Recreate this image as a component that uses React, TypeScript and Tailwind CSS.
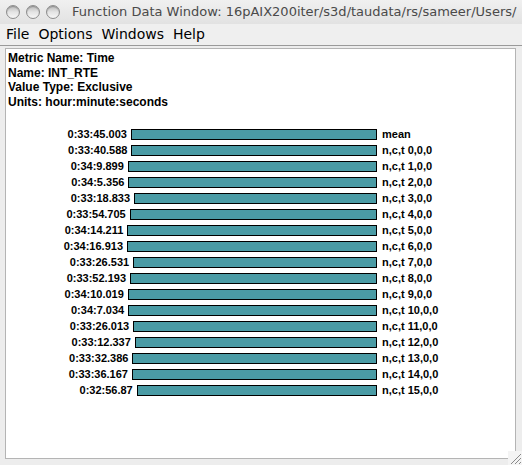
import React from "react";

// rows of the function data window: label, value string
const rows = [
  { name: "mean", value: "0:33:45.003" },
  { name: "n,c,t 0,0,0", value: "0:33:40.588" },
  { name: "n,c,t 1,0,0", value: "0:34:9.899" },
  { name: "n,c,t 2,0,0", value: "0:34:5.356" },
  { name: "n,c,t 3,0,0", value: "0:33:18.833" },
  { name: "n,c,t 4,0,0", value: "0:33:54.705" },
  { name: "n,c,t 5,0,0", value: "0:34:14.211" },
  { name: "n,c,t 6,0,0", value: "0:34:16.913" },
  { name: "n,c,t 7,0,0", value: "0:33:26.531" },
  { name: "n,c,t 8,0,0", value: "0:33:52.193" },
  { name: "n,c,t 9,0,0", value: "0:34:10.019" },
  { name: "n,c,t 10,0,0", value: "0:34:7.034" },
  { name: "n,c,t 11,0,0", value: "0:33:26.013" },
  { name: "n,c,t 12,0,0", value: "0:33:12.337" },
  { name: "n,c,t 13,0,0", value: "0:33:32.386" },
  { name: "n,c,t 14,0,0", value: "0:33:36.167" },
  { name: "n,c,t 15,0,0", value: "0:32:56.87" },
];

const toSeconds = (v: string) => {
  const [h, m, s] = v.split(":").map(Number);
  return h * 3600 + m * 60 + s;
};

const max = Math.max(...rows.map((r) => toSeconds(r.value)));

function Light() {
  return (
    <span className="inline-block w-[14px] h-[14px] rounded-full border border-[#8d8d8d] bg-gradient-to-b from-[#b9b9b9] via-[#e4e4e4] to-[#f6f6f6] shadow-[inset_0_1px_1px_rgba(0,0,0,0.25)]" />
  );
}

export default function App() {
  return (
    <div className="w-[522px] h-[465px] bg-[#ededed] flex flex-col overflow-hidden relative">
      {/* Title bar */}
      <div className="h-[24px] flex items-center bg-gradient-to-b from-[#f0f0f0] to-[#e2e2e2]">
        <div className="flex gap-[6px] pl-[6px]">
          <Light />
          <Light />
          <Light />
        </div>
        <span className="ml-[12px] text-[13px] text-[#4a4a4a] whitespace-nowrap font-['DejaVu_Sans',sans-serif]">
          Function Data Window: 16pAIX200iter/s3d/taudata/rs/sameer/Users/
        </span>
      </div>

      {/* Menu bar */}
      <div className="h-[22px] flex items-center gap-[9px] px-[6px] border-b border-[#9a9a9a] bg-[#efefef] text-[14px] text-black font-['DejaVu_Sans',sans-serif]">
        <span>File</span>
        <span>Options</span>
        <span>Windows</span>
        <span>Help</span>
      </div>

      {/* Data panel */}
      <div className="mt-[2px] ml-[5px] w-[511px] h-[411px] bg-white border border-[#b4b4b4] font-['Liberation_Sans',Arial,sans-serif] font-bold text-black">
        <div className="pl-[2px] pt-[2px] text-[12px] leading-[14.5px]">
          <div>Metric Name: Time</div>
          <div>Name: INT_RTE</div>
          <div>Value Type: Exclusive</div>
          <div>Units: hour:minute:seconds</div>
        </div>

        <div className="mt-[17px] flex flex-col text-[11px]">
          {rows.map((r) => (
            <div key={r.name} className="h-[16px] flex items-center">
              <div className="w-[371px] flex justify-end items-center gap-[4px]">
                <span>{r.value}</span>
                <div
                  className="h-[11px] bg-[#4a9ba5] border border-black"
                  style={{ width: (250 * toSeconds(r.value)) / max }}
                />
              </div>
              <span className="ml-[5px]">{r.name}</span>
            </div>
          ))}
        </div>
      </div>

      {/* Resize grip */}
      <svg className="absolute right-0 bottom-0" width="14" height="14" viewBox="0 0 14 14">
        <rect width="14" height="14" fill="#f4f4f4" />
        <path d="M3 13 L13 3 M7 13 L13 7 M11 13 L13 11" stroke="#8a8a8a" strokeWidth="1" />
      </svg>
    </div>
  );
}
